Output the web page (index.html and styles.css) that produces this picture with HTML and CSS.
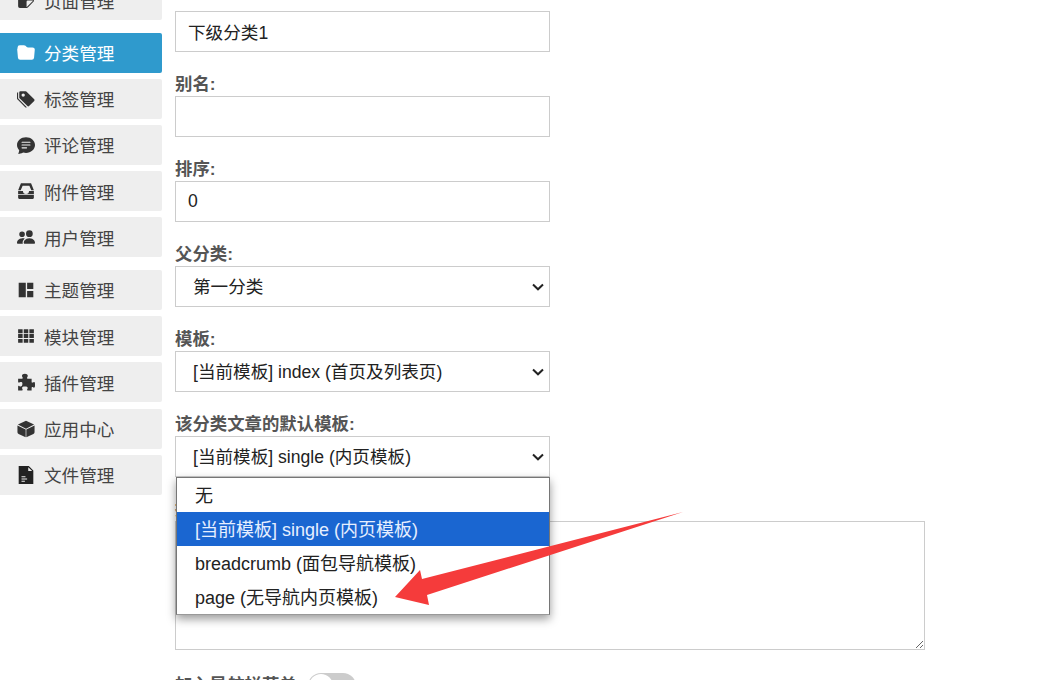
FILE: index.html
```html
<!DOCTYPE html>
<html lang="zh-CN">
<head>
<meta charset="utf-8">
<title>分类管理</title>
<link rel="stylesheet" href="styles.css">
</head>
<body>
<div class="page">
  <nav class="sidebar">
    <div class="group">
      <a class="item"><svg class="icon" viewBox="0 0 16 16"><path d="M2.500 1A1.500 1.500 0 0 0 1 2.500v11A1.500 1.500 0 0 0 2.500 15h6.086a1.500 1.500 0 0 0 1.060-.44l4.915-4.914A1.500 1.500 0 0 0 15 8.586V2.500A1.500 1.500 0 0 0 13.500 1h-11zm6 8.500a1 1 0 0 1 1-1h4.396a.25.25 0 0 1 .177.427l-5.146 5.146a.25.25 0 0 1-.427-.177V9.500z"/></svg><span>页面管理</span></a>
    </div>
    <div class="group">
      <a class="item active"><svg class="icon" viewBox="0 0 16 16"><path d="M9.828 3h3.982a2 2 0 0 1 1.992 2.181l-.637 7A2 2 0 0 1 13.174 14H2.825a2 2 0 0 1-1.991-1.819l-.637-7a1.990 1.990 0 0 1 .342-1.310L.5 3a2 2 0 0 1 2-2h3.672a2 2 0 0 1 1.414.586l.828.828A2 2 0 0 0 9.828 3z"/></svg><span>分类管理</span></a>
      <a class="item"><svg class="icon" viewBox="0 0 16 16"><path d="M2 2a1 1 0 0 1 1-1h4.586a1 1 0 0 1 .707.293l7 7a1 1 0 0 1 0 1.414l-4.586 4.586a1 1 0 0 1-1.414 0l-7-7A1 1 0 0 1 2 6.586V2zm3.500 4a1.500 1.500 0 1 0 0-3 1.500 1.500 0 0 0 0 3z"/><path d="M1.293 7.793A1 1 0 0 1 1 7.086V2a1 1 0 0 0-1 1v4.586a1 1 0 0 0 .293.707l7 7a1 1 0 0 0 1.414 0l.043-.043-7.457-7.457z"/></svg><span>标签管理</span></a>
      <a class="item"><svg class="icon" viewBox="0 0 16 16"><path d="M16 8c0 3.866-3.582 7-8 7a9.060 9.060 0 0 1-2.347-.306c-.584.296-1.925.864-4.181 1.234-.2.032-.352-.176-.273-.362.354-.836.674-1.950.77-2.966C.744 11.370 0 9.760 0 8c0-3.866 3.582-7 8-7s8 3.134 8 7zM4.500 5a.5.5 0 0 0 0 1h7a.5.5 0 0 0 0-1h-7zm0 2.500a.5.5 0 0 0 0 1h7a.5.5 0 0 0 0-1h-7zm0 2.500a.5.5 0 0 0 0 1h4a.5.5 0 0 0 0-1h-4z"/></svg><span>评论管理</span></a>
      <a class="item"><svg class="icon" viewBox="0 0 16 16"><path d="M3.500 1h9l2.500 6.300h-2.300L11 3.300H5L3.300 7.300H1z"/><path d="M1 8h4.300a2.700 2.700 0 0 0 5.400 0H15v2.600H1z"/><path d="M1 11.300h14V14a1 1 0 0 1-1 1H2a1 1 0 0 1-1-1z"/></svg><span>附件管理</span></a>
      <a class="item"><svg class="icon" viewBox="0 0 16 16"><path d="M7 14s-1 0-1-1 1-4 5-4 5 3 5 4-1 1-1 1H7zm4-6a3 3 0 1 0 0-6 3 3 0 0 0 0 6zm-5.784 6A2.238 2.238 0 0 1 5 13c0-1.355.68-2.750 1.936-3.720A6.325 6.325 0 0 0 5 9c-4 0-5 3-5 4s1 1 1 1h4.216zM4.500 8a2.500 2.500 0 1 0 0-5 2.500 2.500 0 0 0 0 5z"/></svg><span>用户管理</span></a>
    </div>
    <div class="group">
      <a class="item"><svg class="icon" viewBox="0 0 16 16"><path d="M1.500 1.500h6.300v13H1.500zM9 1.500h5.500v5.700H9zM9 8.800h5.500v5.700H9z"/></svg><span>主题管理</span></a>
      <a class="item"><svg class="icon" viewBox="0 0 16 16"><path d="M1 2h4v3.500H1zM6 2h4v3.500H6zM11 2h4v3.500h-4zM1 6.300h4v3.500H1zM6 6.300h4v3.500H6zM11 6.300h4v3.500h-4zM1 10.600h4V14H1zM6 10.600h4V14H6zM11 10.600h4V14h-4z"/></svg><span>模块管理</span></a>
      <a class="item"><svg class="icon" viewBox="0 0 16 16"><path d="M1 5h3.500c.6 0 .8-.5.5-1-.4-.6-.6-1-.6-1.500C4.400 1.400 5.600.6 7 .6s2.600.8 2.600 1.900c0 .5-.2.9-.6 1.500-.3.5-.1 1 .5 1H13v3c0 .6.5.8 1 .5.4-.3.8-.5 1.200-.5.8 0 .8 1 .8 2.500s0 2.500-.8 2.500c-.4 0-.8-.2-1.200-.5-.5-.3-1-.1-1 .5v2.500H9.500c-.6 0-.7-.5-.4-1 .3-.4.4-.7.4-1.100 0-1-1-1.400-2.500-1.400s-2.500.4-2.500 1.400c0 .4.1.7.4 1.100.3.5.2 1-.4 1H1v-3.500c0-.6.5-.8 1-.5.4.3.7.5 1.200.5 1 0 1.600-1.100 1.600-2.500S4.200 7.900 3.200 7.900c-.5 0-.8.2-1.200.5-.5.3-1 .1-1-.5z"/></svg><span>插件管理</span></a>
      <a class="item"><svg class="icon" viewBox="0 0 16 16"><path d="M8 .6 15.200 4.100 8 7.800.8 4.100z"/><path d="M.4 4.900 7.700 8.500v6.900l-6.300-3a1.700 1.700 0 0 1-1-1.500z"/><path d="M15.600 4.900 8.300 8.500v6.900l6.300-3a1.700 1.700 0 0 0 1-1.500z"/></svg><span>应用中心</span></a>
      <a class="item"><svg class="icon file" viewBox="0 0 16 16"><path d="M1.500 0h9l4 4v12h-13zm8.500 1v3.500h3.500zM4 9v1h3.500V9zm0 2v1h5v-1zm0 2v1h3v-1z"/></svg><span>文件管理</span></a>
    </div>
  </nav>

  <main class="form">
    <div class="field">
      <label class="label">名称:</label>
      <input class="control" type="text" value="下级分类1">
    </div>
    <div class="field">
      <label class="label">别名:</label>
      <input class="control" type="text" value="">
    </div>
    <div class="field">
      <label class="label">排序:</label>
      <input class="control" type="text" value="0">
    </div>
    <div class="field">
      <label class="label">父分类:</label>
      <select class="control"><option>第一分类</option></select>
    </div>
    <div class="field">
      <label class="label">模板:</label>
      <select class="control"><option>[当前模板] index (首页及列表页)</option></select>
    </div>
    <div class="field open">
      <label class="label">该分类文章的默认模板:</label>
      <select class="control"><option>[当前模板] single (内页模板)</option></select>
      <ul class="dropdown">
        <li>无</li>
        <li class="selected">[当前模板] single (内页模板)</li>
        <li>breadcrumb (面包导航模板)</li>
        <li>page (无导航内页模板)</li>
      </ul>
    </div>
    <div class="field wide">
      <label class="label">摘要:</label>
      <textarea class="control area"></textarea>
    </div>
    <div class="toggle-row">
      <label class="label">加入导航栏菜单</label>
      <span class="toggle"><span class="knob"></span></span>
    </div>
  </main>

  <svg class="arrow" viewBox="0 0 1047 680"><path d="M683 512 427 595 429 605 395 597 420 570 422 579z"/></svg>
</div>
</body>
</html>
```

FILE: styles.css
```css
* { box-sizing: border-box; }
html, body { margin: 0; padding: 0; background: #fff; }
body {
  font-family: "Liberation Sans", "Noto Sans CJK SC", sans-serif;
  font-size: 17.6px;
  color: #222;
}
.page {
  position: relative;
  display: flex;
  align-items: flex-start;
  width: 1047px;
  height: 680px;
  overflow: hidden;
}
.sidebar {
  flex: none;
  width: 162px;
  margin-top: -20px;
  display: flex;
  flex-direction: column;
  gap: 12.600px;
}
.group { display: flex; flex-direction: column; gap: 6.200px; }
.item {
  display: flex;
  align-items: center;
  gap: 9px;
  height: 40px;
  padding-left: 17px;
  background: #eee;
  color: #444;
  border-radius: 0 2px 2px 0;
}
.item.active { background: #2f9acd; color: #fff; }
.icon { flex: none; width: 18px; height: 18px; fill: #333; }
.icon.file { fill: #222; }
.active .icon { fill: #fff; }
.form {
  flex: none;
  width: 750px;
  margin-left: 13px;
  margin-top: -13px;
  display: flex;
  flex-direction: column;
  gap: 20px;
}
.field { position: relative; display: flex; flex-direction: column; width: 375px; }
.field.wide { width: 750px; }
.label {
  height: 24px;
  line-height: 24px;
  font-size: 17.400px;
  font-weight: 700;
  color: #555;
  white-space: nowrap;
}
.field:first-child .label { line-height: 10px; }
.control {
  display: block;
  width: 100%;
  height: 41px;
  border: 1px solid #ccc;
  border-radius: 0;
  background: #fff;
  padding: 0 12px;
  font: inherit;
  color: #222;
  outline: none;
}
select.control {
  appearance: none;
  padding-left: 17px;
  background: #fff url("data:image/svg+xml,%3Csvg xmlns='http://www.w3.org/2000/svg' width='12' height='8' viewBox='0 0 12 8'%3E%3Cpath d='M1 1.500 6 6.300 11 1.500' fill='none' stroke='%23222' stroke-width='2'/%3E%3C/svg%3E") no-repeat right 5px center;
}
.area { height: 129px; }
.dropdown {
  position: absolute;
  left: 1px;
  right: 0;
  top: 65px;
  margin: 0;
  padding: 0;
  list-style: none;
  font-size: 18px;
  background: #fff;
  border: 1px solid #767676;
  border-bottom-color: #999;
  box-shadow: 0 4px 9px rgba(0, 0, 0, .4);
  z-index: 2;
}
.dropdown li {
  height: 34px;
  line-height: 36px;
  padding-left: 18px;
  color: #222;
  white-space: nowrap;
}
.dropdown .selected { background: #1a66d1; color: #e6efff; }
.toggle-row { display: flex; align-items: flex-start; gap: 11px; margin-top: 3px; }
.toggle {
  display: block;
  position: relative;
  width: 48px;
  height: 26px;
  border-radius: 13px;
  background: #ccc;
}
.knob {
  position: absolute;
  left: 1px;
  top: 1px;
  width: 24px;
  height: 24px;
  border-radius: 50%;
  background: #fff;
}
.arrow {
  position: absolute;
  left: 0;
  top: 0;
  width: 1047px;
  height: 680px;
  fill: #f53b3b;
  pointer-events: none;
  z-index: 3;
}
```
